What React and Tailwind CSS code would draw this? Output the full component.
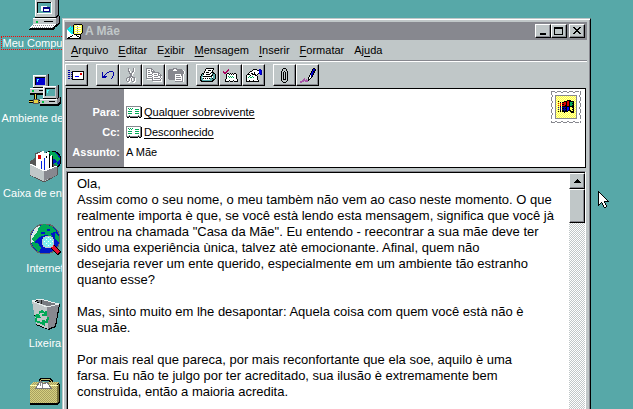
import React from "react";

const INK = {
  k: "#000000",
  w: "#ffffff",
  g: "#87888f",
  s: "#c0c7c8",
  b: "#0000a8",
  B: "#0000ff",
  y: "#ffff57",
  t: "#57a8a8",
  c: "#00ffff",
  n: "#00a857",
  r: "#e00000",
  m: "#a8005f",
  p: "#a857a8",
};

/* Draws a bitmap given as rows of ink letters; a dot is transparent. */
function Bitmap({ rows, className = "" }) {
  const width = Math.max(...rows.map((r) => r.length));
  const runs = [];
  rows.forEach((row, y) => {
    let x = 0;
    while (x < row.length) {
      let end = x + 1;
      while (end < row.length && row[end] === row[x]) end++;
      if (INK[row[x]]) runs.push([x, y, end - x, INK[row[x]]]);
      x = end;
    }
  });
  return (
    <svg aria-hidden="true" width={width} height={rows.length} viewBox={`0 0 ${width} ${rows.length}`} shapeRendering="crispEdges" className={`block shrink-0 ${className}`}>
      {runs.map(([x, y, w, fill]) => (
        <rect key={`${x}-${y}`} x={x} y={y} width={w} height="1" fill={fill} />
      ))}
    </svg>
  );
}

const SEND = [
  "bb...............",
  "....kkkkkkkkkkkk",
  "bb.bkwwwwwwwwwwk",
  "....kwwwwwwwrrwk",
  "bb.bkwwwwwwwrrwk",
  "....kwwwwwwwwwwk",
  "bb.bkwwBBBBwwwwk",
  "....kwwwwwwwwwwk",
  "bb.bkwwwwwwwwwwk",
  "....kkkkkkkkkkkk",
];
const UNDO = [
  ".......bbbb.",
  "b....bb....b",
  "b...b......b",
  "b..b.......b",
  "b.b........b",
  "bbbbb.....b.",
  "bbbb......b.",
  ".........b..",
];
const CUT = [
  "..g....gw.",
  "..gw...gw.",
  "..gw...gw.",
  "..ggw.ggw.",
  "...gw.gw..",
  "...gggww..",
  "....ggw...",
  "....ggw...",
  "...gggg...",
  ".ggggwggg.",
  "g.wgwgw.gw",
  "gw.gwgw.gw",
  "gw.gwgw.gw",
  ".ggww.ggww",
  "..ww...ww.",
];
const COPY = [
  "gggggg..........",
  "gwwwwgg.........",
  "gwggwgwg........",
  "gwwwwgggg.......",
  "gwggwwggggggg...",
  "gwwwwwgwwwwwgg..",
  "gwggggwwgggwgwg.",
  "gwwwwwgwwwwwgggg",
  "gwggggwwggggwwgw",
  "gwwwwwgwwwwwwwgw",
  "gggggggwggggggwg",
  ".wwwwwgwwwwwwwgw",
  "......gggggggggw",
  ".......wwwwwwwww",
];
const PASTE = [
  ".....gggg.......",
  ".gggggwwgggggg..",
  "gggggwwwwggggggw",
  "ggggggggggggggggw",
  "ggggggggggggggggw",
  "ggggggggggggggggw",
  "gggggggwwwwwwggw",
  "gggggggwggggwggw",
  "gggggggwwwwwwwgw",
  "gggggggwgggggwgw",
  "gggggggwwwwwwwgw",
  ".ggggggwgggggwgw",
  ".......wwwwwwwgw",
  ".......ggggggggw",
];
const PRINT = [
  "......kkkkkkkk..",
  ".....kwwwwwwwk..",
  ".....kwwkkkwk...",
  "....kwwwwwwwk...",
  "....kwkkkwwkkk..",
  "..kkwwwwwwkwtkk.",
  ".ktkwwkkkkwwkttk",
  ".ktwwwwwwwwkkttk",
  "kttkkkkkkkkkwttk",
  "ktwwwwwwwwwtwttk",
  "kttkwkwkwkttkttk",
  "kttwwwwwwwtttkk.",
  "kkttttttttttkk..",
  ".kkkkkkkkkkkk...",
];
const CHECK = [
  ".....m..........",
  "....mm..........",
  "m..mm...........",
  "mmmm............",
  ".mm.kk.k.k.kk...",
  "...kwwkwkwkwwk..",
  "...kwwwwwwwwwk..",
  "...kwnwnwnwwwk..",
  "...kwwnwnwnwwk..",
  "...kwwwwwwwwwk..",
  "..kwwwwwwwwwwwk.",
  "..kwwwkwwwkwwwk.",
  "..kkkk.kkk.kkkk.",
];
const CARD = [
  ".......kkkk..bb.",
  "......kwwwwkkBBb",
  "....kkwwwwwwwBBb",
  "...kwwwwkwwwwBBb",
  "..kwwkkwkwwwkBBb",
  ".kkkwwkkkkwk..bb",
  "kwwwkwwwwkk.....",
  "kwwnwwnwwwwk....",
  "kwnwnnwnwwwk....",
  "kwwwwwwwwwwk....",
  "kwwwwwwwwwwk....",
  "kwwkwwwkwwwwk...",
  "kkkkkkkkkkkkk...",
];
const CLIP = [
  "..kkk..",
  ".k...k.",
  ".k...k.",
  "k..k..k",
  "k.k.k.k",
  "k.k.k.k",
  "k.k.k.k",
  "k.k.k.k",
  "k.k.k.k",
  "k.k.k.k",
  "k.k.k.k",
  "k.kkk.k",
  "k.....k",
  ".k...k.",
  "..kkk..",
];
const PEN = [
  ".............kk.",
  "............kBbk",
  "............kBbk",
  "...........kBkk.",
  "...........kBbk.",
  "..........kBbk..",
  "..........kBbk..",
  ".........kwbk...",
  ".........kwbk...",
  "........kwwk....",
  "....p...kwk.....",
  "...pp.p.kk......",
  "..ppppppk.......",
  "pppp.ppp........",
  "pp..............",
];
const MAIL = [
  ".......kkkkkkkk.",
  "......kyyywwyyyk",
  "...c.tkywwgwwwyk",
  "..cctckyyyyyyyyk",
  ".cctcckywwgwwwyk",
  "ctcctckyyyyyyyyk",
  "wcctcckywwgwwwyk",
  "wwcctckyyyyyyyyk",
  "wwwcctkywwgwwwyk",
  "wwwwcckyyyyyyyk.",
  "wwwwwwwkkkkkkk..",
  "wwwwwkwwwkwwwk..",
  "wwwkkwwwwwkkwk..",
  "wkkwwwwwwwwwkk..",
  "kkkkkkkkkkkkkk..",
];
const RECIPIENT = [
  "ggggggggggggggg.",
  "gwwwwwwwwwwwwwgk",
  "gwnwnwnwwwwwwwgk",
  "gwwnwnwwwnnnnwgk",
  "gwwwwwwwwwwwwwgk",
  "gwnnnnwwwnnnnwgk",
  "gwwwwwwwwwwwwwgk",
  "gwnnnnwwwnnnnwgk",
  "gwwwwwwwwwwwwwgk",
  "gwwgwwwwwwwwgwgk",
  "gggkggggggggkggk",
  ".kk.kkkkkkkk.kk.",
];
const POINTER = [
  "k..........",
  "kk.........",
  "kwk........",
  "kwwk.......",
  "kwwwk......",
  "kwwwwk.....",
  "kwwwwwk....",
  "kwwwwwwk...",
  "kwwwwwwwk..",
  "kwwwwwwwwk.",
  "kwwwwwkkkkk",
  "kwwkwwk....",
  "kwk.kwwk...",
  "kk..kwwk...",
  "k....kwwk..",
  ".....kwwk..",
  "......kk...",
];
const FLAG = [
  ".........kkkk...",
  "k.....kkkrrkkkkk",
  "..k.kkrrkrrknnnk",
  "r.r.rrrrkrrknnkk",
  "..r.kkrrkrrknnnk",
  "r.r.rrrkkrrknnkk",
  "..k.kkkkkkkkkkkk",
  "b.b.bbbbkBBkyykk",
  "..b.kkbkkBBkyyyk",
  "b.b.bbbbkBBkyykk",
  "..k.kkbkkBkkkyyk",
  "k.k.kkkkkk..kkkk",
  "......k......kkk",
];

function DesktopSvg({ children }) {
  return (
    <svg aria-hidden="true" width="32" height="34" viewBox="0 0 32 34" shapeRendering="crispEdges" className="block">
      {children}
    </svg>
  );
}

function Computer() {
  return (
    <DesktopSvg>
      <path d="M6 0h21l3 1v16l-3 3H6z" fill="#000" />
      <path d="M6 0h20v19H6z" fill="#c0c7c8" />
      <path d="M26 1l3-1v16l-3 3z" fill="#87888f" />
      <path d="M6 1h20v1H7v16H6z" fill="#fff" />
      <path d="M8 4h15v12H8z" fill="#fff" />
      <path d="M8 4h14v11H8z" fill="#000" />
      <path d="M9 5h13v10H9z" fill="#57a8a8" />
      <path d="M12 8h6v5h-6z" fill="#fff" />
      <path d="M14 9h7v5h-7z" fill="#000080" />
      <path d="M15 11h5v2h-5z" fill="#fff" />
      <path d="M4 20h24l3-2v7l-3 4H4z" fill="#000" />
      <path d="M4 20h23v7H4z" fill="#c0c7c8" />
      <path d="M4 20h23v1H4z" fill="#fff" />
      <path d="M27 20l3-2v6l-3 3z" fill="#87888f" />
      <path d="M7 23h2v2H7z" fill="#00c040" />
      <path d="M15 23h9v1h-9z" fill="#000" />
      <path d="M4 26h24l-3 6H0z" fill="#000" />
      <path d="M4 26h23l-3 4H1z" fill="#fff" />
      <path d="M4 27.5h21M3 29.5h21" stroke="#87888f" strokeDasharray="1 1" />
    </DesktopSvg>
  );
}

function SmallPc({ x, y, screen }) {
  return (
    <g transform={`translate(${x} ${y})`}>
      <path d="M3 1h14l2-1v13l-3 3H3z" fill="#000" />
      <path d="M3 1h13v12H3z" fill="#c0c7c8" />
      <path d="M3 1h13v1H4v11H3z" fill="#fff" />
      <path d="M16 1l2-1v12l-2 2z" fill="#87888f" />
      <path d="M5 3h10v8H5z" fill="#000" />
      <path d="M6 4h9v7H6z" fill={screen} />
      <path d="M7 5h2v1H8v2H7z" fill="#5ff" />
      <path d="M0 14h18l3-2v6l-3 3H0z" fill="#000" />
      <path d="M0 14h17v5H0z" fill="#c0c7c8" />
      <path d="M0 14h17v1H0z" fill="#fff" />
      <path d="M2 16h2v2H2z" fill="#00c040" />
      <path d="M9 16h6v1H9z" fill="#000" />
      <path d="M17 14l3-2v5l-3 2z" fill="#87888f" />
    </g>
  );
}

function Network() {
  return (
    <DesktopSvg>
      <SmallPc x={1} y={1} screen="#0000d0" />
      <path d="M6 21v7M0 28h13" stroke="#000" strokeWidth="3" />
      <path d="M6 21v7M0 28h13" stroke="#e8d040" strokeWidth="1" />
      <path d="M4 26h5v4H4z" fill="#e8d040" stroke="#555" />
      <SmallPc x={11} y={12} screen="#57a8a8" />
    </DesktopSvg>
  );
}

function Inbox() {
  return (
    <DesktopSvg>
      <circle cx="23" cy="12" r="9" fill="#0018c0" stroke="#000" />
      <path d="M17 5l5-2 5 2 4 6-3 3-3-3-3 1-4-3z" fill="#00a857" />
      <path d="M24 16l4-2 1 3-4 4z" fill="#00a857" />
      <path d="M1 14l6-4 19 7 2 2v8L15 34 1 27z" fill="#c0c7c8" stroke="#555" />
      <path d="M1 15l14 7 12-4-9-5-13-1z" fill="#555" />
      <path d="M6 6l5-2v19l-5-3z" fill="#fff" stroke="#555" />
      <path d="M11 4l4-1v20l-4-2z" fill="#fff" />
      <path d="M15 5l5-1v19l-5 2z" fill="#fff" />
      <path d="M20 8l3-1v14l-3 1z" fill="#fff" />
      <path d="M17.5 8v2M20.5 6v16M23.5 8v12" stroke="#000" />
      <path d="M12.5 13v8M15.5 10v13" stroke="#0020e0" />
      <path d="M9 7h3v4H9z" fill="#e00000" />
      <path d="M1 16l14 7v10L1 27z" fill="#c0c7c8" />
      <path d="M15 23l13-5v9l-13 6z" fill="#87888f" />
      <path d="M1 16l14 7 13-5" fill="none" stroke="#fff" />
    </DesktopSvg>
  );
}

function Globe() {
  return (
    <DesktopSvg>
      <circle cx="16" cy="16" r="15" fill="#0018c8" stroke="#666" />
      <path d="M2 13l4-8 7-3-2 8-6 9-3 1z" fill="#d8e8e8" />
      <path d="M10 4l5-3 7 2 6 5-6 2 1 4-6-2-7 2-5 5-2-3 5-7z" fill="#00a857" />
      <path d="M3 19l6 1 3 5-2 4-6-5z" fill="#00a857" />
      <path d="M26 10l4 4v5l-4-3z" fill="#00a857" />
      <path d="M12 9h4v2h-4zM18 6h3v2h-3z" fill="#0018c8" />
      <path d="M23 23l8 8" stroke="#000" strokeWidth="5" />
      <path d="M23 23l7 7" stroke="#e01030" strokeWidth="3" />
      <circle cx="19" cy="19" r="6" fill="#7ff0f0" stroke="#c0c7c8" strokeWidth="1" />
      <path d="M15 18.5h1M17 16.5h1M19 14.5h1M17 20.5h1M19 18.5h1M21 16.5h1M19 22.5h1M21 20.5h1M23 18.5h1" stroke="#fff" />
    </DesktopSvg>
  );
}

function Bin() {
  return (
    <DesktopSvg>
      <path d="M3 3l8-2 20 5-4 23-7 3-13-5z" fill="#000" />
      <path d="M3 3l15 5 1 23-12-5z" fill="#c0c7c8" />
      <path d="M18 8l12-2-4 22-7 3z" fill="#87888f" />
      <path d="M5 3l7-1v3zM13 2l15 4-10 2-8-3z" fill="#777a80" />
      <path d="M12 2v4" stroke="#222" />
      <path d="M3 3l8-2 19 5-12 3z" fill="none" stroke="#e8eeee" />
      <g fill="none" stroke="#00a857" strokeWidth="2">
        <path d="M10 15l3-2 4 3M17 13v4h-4" />
        <path d="M8 17l-1 6 5 2M6 18l3-1 2 3" />
        <path d="M19 19l-1 5-5 1M15 22l-2 3 3 2" />
      </g>
    </DesktopSvg>
  );
}

function Briefcase() {
  return (
    <DesktopSvg>
      <defs>
        <pattern id="leather" width="2" height="2" patternUnits="userSpaceOnUse">
          <path d="M0 0h2v2H0z" fill="#d6d080" />
          <path d="M0 0h1v1H0zM1 1h1v1H1z" fill="#a8a060" />
        </pattern>
      </defs>
      <g transform="translate(0 2)">
        <path d="M11 11V6l2-2h7l2 2v6" fill="none" stroke="#000" strokeWidth="3" />
        <path d="M11 11V6l2-2h7l2 2v6" fill="none" stroke="#c8c070" strokeWidth="1" />
        <path d="M1 10l3-3h26l1 3v17l-3 3H1z" fill="#000" />
        <path d="M1 10l3-3h26l-2 3v18H1z" fill="url(#leather)" />
        <path d="M28 10l2-2v18l-2 2z" fill="#77703c" />
        <path d="M1 10h6l1 3h11l2-3h8" fill="none" stroke="#ffffb0" />
        <path d="M7 13l4-7 4 3 3-2 4 6z" fill="#fff" stroke="#777" />
        <path d="M11 6v5M13 9v4" stroke="#888" />
      </g>
    </DesktopSvg>
  );
}

const SHORTCUTS = [
  { label: "Meu Computador", Art: Computer, selected: true },
  { label: "Ambiente de rede", Art: Network },
  { label: "Caixa de entrada", Art: Inbox },
  { label: "Internet", Art: Globe },
  { label: "Lixeira", Art: Bin },
];

const MENUS = [
  ["", "A", "rquivo"],
  ["", "E", "ditar"],
  ["E", "x", "ibir"],
  ["", "M", "ensagem"],
  ["", "I", "nserir"],
  ["", "F", "ormatar"],
  ["Aj", "u", "da"],
];

const TOOLS = [
  [["Enviar", SEND]],
  [["Desfazer", UNDO], ["Recortar", CUT], ["Copiar", COPY], ["Colar", PASTE]],
  [["Imprimir", PRINT], ["Verificar nomes", CHECK], ["Catálogo", CARD]],
  [["Anexar", CLIP], ["Assinatura", PEN]],
];

const MESSAGE = `Ola,
Assim como o seu nome, o meu tambèm não vem ao caso neste momento. O que
realmente importa è que, se você està lendo esta mensagem, significa que você jà
entrou na chamada "Casa da Mãe". Eu entendo - reecontrar a sua mãe deve ter
sido uma experiência ùnica, talvez atè emocionante. Afinal, quem não
desejaria rever um ente querido, especialmente em um ambiente tão estranho
quanto esse?

Mas, sinto muito em lhe desapontar: Aquela coisa com quem você està não è
sua mãe.

Por mais real que pareca, por mais reconfortante que ela soe, aquilo è uma
farsa. Eu não te julgo por ter acreditado, sua ilusão è extremamente bem
construìda, então a maioria acredita.`;

const RAISED =
  "border border-t-white border-l-white border-r-black border-b-black bg-[#c0c7c8] shadow-[inset_-1px_-1px_#87888f]";

function CaptionButton({ label, children, className = "" }) {
  return (
    <button aria-label={label} className={`flex h-[14px] w-4 items-center justify-center ${RAISED} ${className}`}>
      <svg aria-hidden="true" width="10" height="10" viewBox="0 0 10 10" shapeRendering="crispEdges" className="block shrink-0">
        {children}
      </svg>
    </button>
  );
}

function Recipient({ name }) {
  return (
    <span className="flex items-center gap-0.5">
      <Bitmap rows={RECIPIENT} />
      <a href="#contato" className="text-black underline underline-offset-2">{name}</a>
    </span>
  );
}

function Stamp() {
  return (
    <svg aria-hidden="true" width="30" height="32" viewBox="0 0 30 32" shapeRendering="crispEdges" className="block shrink-0">
      <defs>
        <pattern id="stampfill" width="2" height="2" patternUnits="userSpaceOnUse">
          <path d="M0 0h2v2H0z" fill="#ffffb0" />
          <path d="M0 0h1v1H0zM1 1h1v1H1z" fill="#ffff40" />
        </pattern>
      </defs>
      <path d="M0 .5h30M0 31.5h30" stroke="#87888f" strokeDasharray="4 2" />
      <path d="M.5 0v32M29.5 0v32" stroke="#87888f" strokeDasharray="4 2" />
      <path d="M4 1.5h2M10 1.5h2M16 1.5h2M22 1.5h2M4 30.5h2M10 30.5h2M16 30.5h2M22 30.5h2" stroke="#87888f" />
      <path d="M1.5 4v2M1.5 10v2M1.5 16v2M1.5 22v2M28.5 4v2M28.5 10v2M28.5 16v2M28.5 22v2" stroke="#87888f" />
      <rect x="4.5" y="4.5" width="21" height="23" fill="url(#stampfill)" stroke="#87888f" />
      <svg x="7" y="9" width="16" height="14" viewBox="0 0 16 14">
        {FLAG.flatMap((row, y) =>
          [...row].map((c, x) => (c === "." ? null : <rect key={`${x}-${y}`} x={x} y={y} width="1" height="1" fill={INK[c]} />)),
        )}
      </svg>
    </svg>
  );
}

export default function App() {
  return (
    <div className="relative h-screen w-full overflow-hidden bg-[#57a8a8] font-['Liberation_Sans',Arial,sans-serif] text-[11px] text-black">
      <nav aria-label="Área de trabalho" className="-mt-0.5 flex w-[90px] flex-col">
        {SHORTCUTS.map(({ label, Art, selected }) => (
          <button key={label} className="flex h-[75px] flex-col items-center gap-1 whitespace-nowrap text-white">
            <Art />
            <span className={`border border-dotted px-px leading-3 ${selected ? "border-[#ff0000]" : "border-transparent"}`}>{label}</span>
          </button>
        ))}
        <button aria-label="Porta-arquivos" className="flex flex-col items-center">
          <Briefcase />
        </button>
      </nav>

      <main className="absolute top-[18px] right-[42px] -bottom-1 left-[62px] flex flex-col border border-t-[#c0c7c8] border-r-black border-b-black border-l-[#c0c7c8] bg-[#c0c7c8] pt-[3px] pr-[3px] pl-0.5 shadow-[inset_1px_1px_#ffffff,inset_-1px_-1px_#87888f]">
        <header className="flex h-[18px] shrink-0 items-center bg-[#87888f] pr-0.5 pl-0.5">
          <Bitmap rows={MAIL} />
          <h1 className="ml-0.5 flex-1 text-xs font-bold text-[#c0c7c8]">A Mãe</h1>
          <CaptionButton label="Minimizar">
            <path d="M2 7h6v2H2z" fill="#000" />
          </CaptionButton>
          <CaptionButton label="Maximizar">
            <path d="M0 1h9v8H0zM1 3v5h7V3z" fill="#000" fillRule="evenodd" />
          </CaptionButton>
          <CaptionButton label="Fechar" className="ml-0.5">
            <path d="M1 1h2v1h1v1h2V2h1V1h2v1H8v1H7v1H6v1h1v1h1v1h1v1H7V7H6V6H4v1H3v1H1V7h1V6h1V5h1V4H3V3H2V2H1z" fill="#000" />
          </CaptionButton>
        </header>

        <nav aria-label="Menu" className="flex h-[21px] shrink-0 items-center gap-2.5 border-b border-[#87888f] pl-1.5">
          {MENUS.map(([before, key, after]) => (
            <button key={before + key + after} className="leading-4">
              {before}
              <span className="underline underline-offset-2">{key}</span>
              {after}
            </button>
          ))}
        </nav>

        <div role="toolbar" aria-label="Ferramentas" className="flex h-[27px] shrink-0 items-center gap-2 border-t border-white">
          {TOOLS.map((group, i) => (
            <div key={i} className="flex">
              {group.map(([label, rows]) => (
                <button key={label} aria-label={label} className={`flex h-[22px] w-[23px] items-center justify-center ${RAISED}`}>
                  <Bitmap rows={rows} />
                </button>
              ))}
            </div>
          ))}
        </div>

        <section className="mx-px flex h-20 shrink-0 border border-black bg-white">
          <div className="flex w-[57px] flex-col bg-[#87888f] pt-[13px] pr-1 text-right leading-5 font-bold text-white">
            <span>Para:</span>
            <span>Cc:</span>
            <label htmlFor="assunto">Assunto:</label>
          </div>
          <div className="flex flex-1 flex-col pt-[13px] pl-0.5 leading-5">
            <Recipient name="Qualquer sobrevivente" />
            <Recipient name="Desconhecido" />
            <input id="assunto" defaultValue="A Mãe" className="h-5 w-full outline-none" />
          </div>
          <div className="pt-0.5 pr-1">
            <Stamp />
          </div>
        </section>

        <section className="mx-px mt-[3px] flex flex-1 border border-t-[#87888f] border-r-white border-b-white border-l-[#87888f]">
          <div className="flex flex-1 border-t border-l border-black bg-white">
            <textarea
              aria-label="Mensagem"
              wrap="off"
              defaultValue={MESSAGE}
              className="block flex-1 resize-none overflow-hidden pt-[3px] pl-[9px] text-[13px] leading-4 outline-none"
            />
            <div className="flex w-4 flex-col bg-[repeating-conic-gradient(#c0c7c8_0_25%,#ffffff_0_50%)] bg-[length:2px_2px]">
              <button aria-label="Rolar para cima" className={`flex h-4 items-center justify-center ${RAISED}`}>
                <svg aria-hidden="true" width="7" height="4" viewBox="0 0 7 4" shapeRendering="crispEdges">
                  <path d="M3 0h1v1h1v1h1v1h1v1H0V3h1V2h1V1h1z" fill="#000" />
                </svg>
              </button>
              <div className={`h-[34px] ${RAISED}`} />
            </div>
          </div>
        </section>
      </main>

      <Bitmap rows={POINTER} className="absolute top-[191px] left-[598px]" />
    </div>
  );
}
